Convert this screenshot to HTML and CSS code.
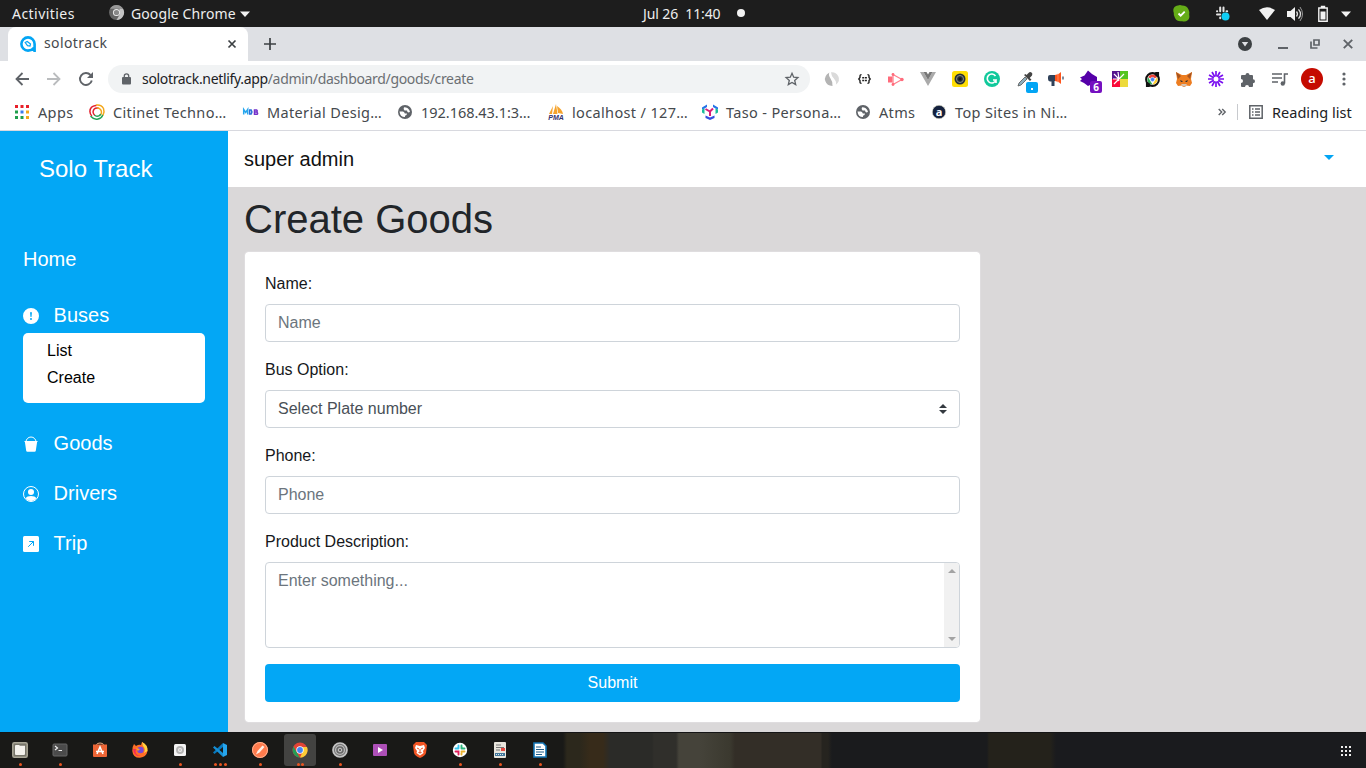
FILE: index.html
```html
<!DOCTYPE html>
<html lang="en">
<head>
<meta charset="utf-8">
<title>solotrack</title>
<link rel="stylesheet" href="styles.css">
</head>
<body>
<div class="desktop">
<header class="topbar">
  <span class="activities">Activities</span>
  <svg class="app-logo" width="15" height="15" viewBox="0 0 16 16"><circle cx="8" cy="8" r="8" fill="#666"/><path d="M1 4a8 8 0 0 1 14 0H8z" fill="#999"/><path d="M15 4a8 8 0 0 1-7 12l3.500-6L11 4z" fill="#c4c4c4"/><circle cx="8" cy="8" r="3.800" fill="#eee"/><circle cx="8" cy="8" r="2.800" fill="#888"/></svg>
  <span class="app-name">Google Chrome</span>
  <svg class="app-caret" width="10" height="6" viewBox="0 0 10 6"><path d="M0 .5h10L5 6z" fill="#f2f2f2"/></svg>
  <span class="clock">Jul 26&nbsp; 11:40</span>
  <span class="dot"></span>
  <div class="tray">
    <svg width="17" height="17" viewBox="0 0 17 17"><path d="M5 .5q2-.8 4 0 5 0 6.500 4 1.500 3 .7 5 .8 4-1.500 5.800-2.500 2-5.500.9Q4 17 2 13 .3 10 .8 8-.5 4 1.500 2 3 .4 5 .5z" fill="#65ac17"/><path d="M5.500 8.500l2.200 2.200 4-4" fill="none" stroke="#fff" stroke-width="1.800"/></svg>
    <svg width="17" height="17" viewBox="0 0 17 17"><g fill="none" stroke="#e4e4e4" stroke-width="2" stroke-linecap="round"><path d="M6.200 2.500v3.700M3 6.200h.2M9.500 2.500v3.700M12.500 6.200h.7M3 9.500h3.200M6.200 12.500v.7M9.500 9.500h3"/></g><circle cx="11.500" cy="11.500" r="4" fill="#10cdf5"/></svg>
    <svg width="16" height="13" viewBox="0 0 16 13"><path d="M0 3Q8-2.500 16 3L8 13z" fill="#f2f2f2"/></svg>
    <svg width="17" height="16" viewBox="0 0 17 16"><path d="M0 5h3.500L8 1v14l-4.500-4H0z" fill="#f2f2f2"/><path d="M9.500 5.500q2 2.500 0 5M11.500 3.300q4 4.700 0 9.400" fill="none" stroke="#ddd" stroke-width="1.300"/><path d="M13 1q5 7 0 14" fill="none" stroke="#999"/></svg>
    <svg width="10" height="16" viewBox="0 0 10 16"><path d="M3.500 1.500V.5h3v1M.8 2h8.400v13.200H.8z" fill="none" stroke="#f2f2f2" stroke-width="1.400"/><path d="M2.500 5.500h5v8h-5z" fill="#f2f2f2"/></svg>
    <svg width="10" height="6" viewBox="0 0 10 6"><path d="M0 .5h10L5 6z" fill="#f2f2f2"/></svg>
  </div>
</header>

<div class="tabstrip">
  <div class="tab">
    <svg width="16" height="16" viewBox="0 0 16 16"><path d="M14.600 16V8A6.600 6.600 0 1 0 8 14.600q4 0 6-3" fill="none" stroke="#03a5f4" stroke-width="2.600"/><path d="M5.200 6.500l2-1 3.300 2.500-.5 2-2.500-.3z" fill="none" stroke="#03a5f4" stroke-width="1.200"/></svg>
    <span class="tab-title">solotrack</span>
    <svg width="8" height="8" viewBox="0 0 8 8"><path d="M.5.5l7 7M7.500.5l-7 7" stroke="#3c4043" stroke-width="1.700"/></svg>
  </div>
  <svg class="newtab" width="12" height="12" viewBox="0 0 12 12"><path d="M6 0v12M0 6h12" stroke="#3c4043" stroke-width="1.700"/></svg>
  <div class="window-controls">
    <svg width="14" height="14" viewBox="0 0 14 14"><circle cx="7" cy="7" r="7" fill="#3c4043"/><path d="M3.800 5h6.400L7 9.500z" fill="#dee0e4"/></svg>
    <svg width="10" height="14" viewBox="0 0 10 14"><path d="M0 11h10" stroke="#5f6368" stroke-width="2"/></svg>
    <svg width="10" height="10" viewBox="0 0 10 10"><path d="M4 1h5v5H4zM1 2.500V9h6.500" fill="none" stroke="#5f6368" stroke-width="1.700"/></svg>
    <svg width="10" height="10" viewBox="0 0 10 10"><path d="M.8.8l8.400 8.400M9.200.8L.8 9.200" stroke="#5f6368" stroke-width="1.900"/></svg>
  </div>
</div>

<div class="toolbar">
  <div class="nav">
    <svg width="14" height="14" viewBox="0 0 14 14"><path d="M14 7H1.500M7.500 1L1.500 7l6 6" fill="none" stroke="#5f6368" stroke-width="1.800"/></svg>
    <svg width="14" height="14" viewBox="0 0 14 14"><path d="M0 7h12.500M6.500 1l6 6-6 6" fill="none" stroke="#babcbe" stroke-width="1.800"/></svg>
    <svg width="14" height="14" viewBox="0 0 14 14"><path d="M12.800 8.500A6 6 0 1 1 11.500 3" fill="none" stroke="#5f6368" stroke-width="1.900"/><path d="M14 0v6H8z" fill="#5f6368"/></svg>
  </div>
  <div class="omnibox">
    <svg width="9" height="12" viewBox="0 0 9 12"><path d="M2.300 5V3a2.200 2.200 0 0 1 4.400 0v2" fill="none" stroke="#5f6368" stroke-width="1.300"/><rect y="4" width="9" height="7.500" rx="1" fill="#5f6368"/></svg>
    <span class="url">solotrack.netlify.app<span class="path">/admin/dashboard/goods/create</span></span>
    <svg width="14" height="14" viewBox="0 0 14 14"><path d="M7 1.300l1.700 3.900 4.200.4-3.200 2.800 1 4.200L7 10.400l-3.700 2.200 1-4.200-3.200-2.800 4.200-.4z" fill="none" stroke="#5f6368" stroke-width="1.300"/></svg>
  </div>
  <div class="extensions">
    <i><svg width="14" height="14" viewBox="0 0 14 14"><path d="M4.500.5Q3 3 5.500 6.500T7.500 13.900Q2 14 .3 9T4.500.5z" fill="#b4b4b4"/><path d="M6 .2q5-.5 7.300 4t-2.500 8.600q1-3-1.800-6T6 .2z" fill="#dadada"/><path d="M5 .7q0 3 3 6t1.500 6.500" fill="none" stroke="#fff" stroke-width=".8"/></svg></i>
    <i><svg width="13" height="10" viewBox="0 0 13 10"><path d="M3.500.7Q2 .5 2 2v1.500L.8 5 2 6.500V8q0 1.500 1.500 1.300M9.500.7Q11 .5 11 2v1.500L12.200 5 11 6.500V8q0 1.500-1.500 1.300M4.200 3.800h2m.7 0h2m-4.700 2.700h2m.7 0h2" fill="none" stroke="#222" stroke-width="1.400"/></svg></i>
    <i><svg width="16" height="13" viewBox="0 0 16 13"><path d="M0 3.500h4.500v6H0z" fill="#ff6b7b"/><path d="M5 1.500l9 5-9 5z" fill="none" stroke="#ff7d8a" stroke-width="1.200"/><circle cx="5" cy="1.500" r="1.400" fill="#ff6b7b"/><circle cx="14" cy="6.500" r="1.700" fill="#ff6b7b"/><circle cx="5" cy="11.500" r="1.400" fill="#ff6b7b"/></svg></i>
    <i><svg width="16" height="14" viewBox="0 0 16 14"><path d="M0 0h3.500L8 8l4.500-8H16L8 14z" fill="#aaa"/><path d="M3.500 0h3L8 2.600 9.500 0h3L8 8z" fill="#777"/></svg></i>
    <i><svg width="16" height="16" viewBox="0 0 16 16"><rect width="16" height="16" rx="2.500" fill="#ffde05"/><circle cx="8" cy="8" r="5.500" fill="#252f38"/><circle cx="8" cy="8" r="3.500" fill="none" stroke="#8a8d85"/><circle cx="8" cy="8" r="1.500" fill="#111"/></svg></i>
    <i><svg width="16" height="16" viewBox="0 0 16 16"><circle cx="8" cy="8" r="8" fill="#11c99b"/><path d="M11.500 5A4.500 4.500 0 1 0 12 9H9m3 0v3" fill="none" stroke="#fff" stroke-width="1.600"/></svg></i>
    <i><svg class="wide" width="22" height="22" viewBox="0 0 22 22"><path d="M2 15l1-3 6-6 2 2-6 6z" fill="#8faebd" stroke="#555" stroke-width=".8"/><path d="M8 4l6 6 1.500-1.500-1.800-1.500L16 4.500q1-2-.5-3t-3 .5L10.500 4 9.500 3z" fill="#444"/><rect x="10" y="11" width="12" height="11" rx="2" fill="#03a5f4"/><rect x="15" y="17" width="2" height="2" fill="#fff"/></svg></i>
    <i><svg width="16" height="14" viewBox="0 0 16 14"><path d="M0 5q0-2 2-2h5v6H6.500v5h-3V9.500H2Q0 9 0 7z" fill="#2f4159"/><path d="M7 3q4-.5 6-3v12q-2-2.500-6-3z" fill="#ff551c"/><path d="M10 1.500v9" stroke="#ffb194" stroke-width=".6"/><path d="M15 4.500v3" stroke="#2f4159" stroke-width="1.200"/></svg></i>
    <i><svg class="wide" width="22" height="22" viewBox="0 0 22 22"><path d="M0 6.500l4.500-2L8-.5l4 3.500 5 3v5l-5 2-4 2-4-3-4-2 2-2z" fill="#5500a8"/><rect x="10" y="10" width="12" height="12" rx="2" fill="#7510c0"/><text x="16" y="19.800" text-anchor="middle" class="badge">6</text></svg></i>
    <i><svg width="16" height="16" viewBox="0 0 16 16"><path d="M0 0h8v8H0z" fill="#54158e"/><path d="M8 0h8v8H8z" fill="#55c51f"/><path d="M0 8h8v8H0z" fill="#fa0938"/><path d="M8 8h8v8H8z" fill="#edda3c"/><path d="M7 8L2 3m5 5L6 1m1 7l5-5M7 8H1m6 0l-5 5m4-5l1 2" stroke="#fff" stroke-width="1.200"/></svg></i>
    <i><svg width="15" height="15" viewBox="0 0 16 16"><circle cx="8" cy="8" r="6.800" fill="#fff" stroke="#111" stroke-width="2.200"/><path d="M11 0h4v5h-5zM5 16H1v-5h5z" fill="#111"/><path d="M3.300 5.500a5.300 5.300 0 0 1 9.400 0L8 8z" fill="#ef4136"/><path d="M3.300 5.500L8 13.300a5.300 5.300 0 0 1-4.700-7.800z" fill="#2ca950"/><path d="M8 13.300L12.700 5.500A5.300 5.300 0 0 1 8 13.300z" fill="#ffcf2e"/><circle cx="8" cy="8" r="2.300" fill="#4285f4" stroke="#fff" stroke-width=".6"/></svg></i>
    <i><svg width="16" height="16" viewBox="0 0 16 16"><path d="M0 1l6 3h4l6-3-1 7 1 4-2 3-4-.5L9 16H7l-1-1.500L2 15l-2-3 1-4z" fill="#ed7d20"/><path d="M0 1l5 4-3 3zM16 1l-5 4 3 3z" fill="#a75420"/><path d="M5 13h6l-2 2.500H7z" fill="#d5c4b5"/><path d="M4 9l2.500 1v1H5zm8 0l-2.500 1v1H11z" fill="#333"/></svg></i>
    <i><svg width="16" height="16" viewBox="-8 -8 16 16"><g stroke="#7a10f0" stroke-width="1.700"><path d="M0-8V8M-8 0H8M-4-7L4 7M-7-4L7 4M4-7L-4 7M7-4L-7 4"/></g><circle r="2.500" fill="#fff"/></svg></i>
    <i><svg width="15" height="15" viewBox="0 0 15 15"><path d="M0 4q0-1 1-1h3.500a2 2 0 1 1 4 0H11q1 0 1 1v3.200a2 2 0 1 1 0 4V14q0 1-1 1H8a2 2 0 1 0-4 0H1q-1 0-1-1v-3a2 2 0 1 0 0-4z" fill="#5f6368"/></svg></i>
    <i><svg width="16" height="13" viewBox="0 0 16 13"><path d="M0 1h10M0 5h10M0 9h6M12.500 10.500V1H16" fill="none" stroke="#5f6368" stroke-width="1.600"/><circle cx="10.800" cy="10.500" r="2.200" fill="#5f6368"/></svg></i>
    <i><b class="avatar">a</b></i>
    <i><svg width="4" height="14" viewBox="0 0 4 14"><g fill="#5f6368"><circle cx="2" cy="2" r="1.600"/><circle cx="2" cy="7" r="1.600"/><circle cx="2" cy="12" r="1.600"/></g></svg></i>
  </div>
</div>

<div class="bookmarks">
  <div class="bm apps"><svg width="16" height="16" viewBox="0 0 16 16"><path d="M1 1h3v3H1zM6.500 1h3v3h-3zM12 1h3v3h-3z" fill="#e8202a"/><path d="M1 6.500h3v3H1z" fill="#1f9e4b"/><path d="M6.500 6.500h3v3h-3z" fill="#3b7bea"/><path d="M12 6.500h3v3h-3z" fill="#f3a71b"/><path d="M1 12h3v3H1zM6.500 12h3v3h-3z" fill="#1f9e4b"/><path d="M12 12h3v3h-3z" fill="#f3a71b"/></svg><span>Apps</span></div>
  <div class="bm citinet"><svg width="16" height="16" viewBox="0 0 16 16"><g fill="none" stroke-width="1.500" stroke-linecap="round"><path d="M7 1.500Q1 2 .9 7.500q.2 2.500 1.600 4M9 4Q4.500 3.500 4 8q.3 2 1.500 3" stroke="#e3202e"/><path d="M7.500 1q5-.5 7 3.500 1.300 3.500-.5 6.500M8.500 4q3.500.5 4 4 0 2-1.200 3" stroke="#f3a71b"/><path d="M2 12.500q3 3.500 7 2.500 3.500-.8 4.500-3.500M6 11.500q3 2 5.500-1" stroke="#23a455"/></g></svg><span>Citinet Techno…</span></div>
  <div class="bm material"><svg width="16" height="16" viewBox="0 0 16 16"><g fill="none" stroke-width="1.500"><path d="M.7 10.500v-5l2 3 2-3v5" stroke="#27a7ee"/><path d="M6.700 6v4h1.500q1.500-2 0-4z" stroke="#2b72d9"/><path d="M11.500 6v4.200h2.700q1-1-.5-2.200 1-1 0-2zM11.500 8h2" stroke="#7431c9"/></g></svg><span>Material Desig…</span></div>
  <div class="bm local-ip"><svg width="14" height="14" viewBox="0 0 14 14"><circle cx="7" cy="7" r="7" fill="#5f6368"/><path d="M1.500 6.500H5q1.500.3 1.800 2H9q0 2-2 2.200V12Q2 12 1.500 6.500zM6 2.200q4.500 0 6 4.300-1 1.500-2.500.5L9 5.500H6.500Q5 4 6 2.200z" fill="#fff"/></svg><span>192.168.43.1:3…</span></div>
  <div class="bm pma"><svg width="16" height="16" viewBox="0 0 16 16"><path d="M1 10L5 2l-1 8zM5 10L8 0l1.500 10zM9 2q5 3 6 8l-5-1z" fill="#f5a32c"/><text x="8" y="15.500" text-anchor="middle" class="pma-mark">PMA</text></svg><span>localhost / 127…</span></div>
  <div class="bm taso"><svg width="16" height="16" viewBox="0 0 16 16"><path d="M0 3.500L5 .5v2.500L2.500 4.500 0 5.500zM11 .5l5 3v2l-2.500-1L11 3z" fill="#2372e8"/><path d="M0 5.500l2.500-1V10L0 8.500zM16 5.500l-2.500-1V10L16 8.500z" fill="#18bc9c"/><path d="M3.500 5L8 7.500l3-3M8 7.500V12" fill="none" stroke="#d71e7a" stroke-width="2"/><path d="M3.500 11.500L8 13.500l4.500-2V14L8 16l-4.500-2z" fill="#3450df"/></svg><span>Taso - Persona…</span></div>
  <div class="bm atms"><svg width="14" height="14" viewBox="0 0 14 14"><circle cx="7" cy="7" r="7" fill="#5f6368"/><path d="M1.500 6.500H5q1.500.3 1.800 2H9q0 2-2 2.200V12Q2 12 1.500 6.500zM6 2.200q4.500 0 6 4.300-1 1.500-2.500.5L9 5.500H6.500Q5 4 6 2.200z" fill="#fff"/></svg><span>Atms</span></div>
  <div class="bm sites"><svg width="14" height="14" viewBox="0 0 14 14"><circle cx="7" cy="7" r="6.700" fill="#14213e" stroke="#dcdcc4" stroke-width=".6"/><text x="7" y="10.800" text-anchor="middle" class="a-mark">a</text></svg><span>Top Sites in Ni…</span></div>
  <div class="reading">
    <svg width="8" height="8" viewBox="0 0 8 8"><path d="M.7 1l3 3-3 3M4.200 1l3 3-3 3" fill="none" stroke="#5f6368" stroke-width="1.400"/></svg>
    <span class="divider"></span>
    <svg width="14" height="14" viewBox="0 0 14 14"><path d="M.8.8h12.400v12.400H.8z" fill="none" stroke="#5f6368" stroke-width="1.500"/><path d="M3 4h1.500M3 7h1.500M3 10h1.500M6 4h5M6 7h5M6 10h5" stroke="#5f6368" stroke-width="1.500"/></svg>
    <span class="reading-label">Reading list</span>
  </div>
</div>

<div class="app">
  <nav class="sidebar">
    <div class="brand">Solo Track</div>
    <a class="home">Home</a>
    <a class="item buses"><svg width="16" height="16" viewBox="0 0 16 16"><path fill="#fff" fill-rule="evenodd" d="M16 8A8 8 0 1 1 0 8a8 8 0 0 1 16 0zM8 4a.905.905 0 0 0-.9.995l.35 3.507a.552.552 0 0 0 1.100 0l.35-3.507A.905.905 0 0 0 8 4zm0 6a1 1 0 1 0 0 2 1 1 0 0 0 0-2z"/></svg>Buses</a>
    <div class="submenu"><a>List</a><a>Create</a></div>
    <a class="item"><svg width="16" height="16" viewBox="0 0 16 16"><path d="M3 6a5 5 0 0 1 10 0" fill="none" stroke="#fff"/><path fill="#fff" d="M1.500 5h13v1h-.4l-1.300 8.700q-.2 1.100-1.200 1.100H4.400q-1 0-1.200-1.100L1.900 6h-.4z"/></svg>Goods</a>
    <a class="item"><svg width="16" height="16" viewBox="0 0 16 16"><circle cx="8" cy="8" r="7.500" fill="none" stroke="#fff"/><circle cx="8" cy="6" r="3" fill="#fff"/><path fill="#fff" d="M2.500 12q1.500-2 5.500-2t5.500 2q-2 3-5.500 3t-5.500-3z"/></svg>Drivers</a>
    <a class="item"><svg width="16" height="16" viewBox="0 0 16 16"><rect width="16" height="16" rx="1.500" fill="#fff"/><path d="M5.200 10.800L10.600 5.400M6.200 5.500h4.300v4.300" fill="none" stroke="#03a5f4"/></svg>Trip</a>
  </nav>
  <main class="main">
    <div class="userbar"><span>super admin</span><svg width="10" height="5" viewBox="0 0 10 5"><path d="M0 0h10L5 5z" fill="#03a5f4"/></svg></div>
    <div class="content">
      <h1>Create Goods</h1>
      <form class="card">
        <label>Name:</label>
        <input class="control" placeholder="Name">
        <label>Bus Option:</label>
        <div class="control select"><span>Select Plate number</span><svg width="8" height="10" viewBox="0 0 4 5"><path fill="#343a40" d="M2 0L0 2h4zm0 5L0 3h4z"/></svg></div>
        <label>Phone:</label>
        <input class="control" placeholder="Phone">
        <label>Product Description:</label>
        <div class="control area"><span>Enter something...</span><div class="rail"><svg width="8" height="4" viewBox="0 0 8 4"><path d="M0 4l4-4 4 4z" fill="#a3a3a3"/></svg><svg width="8" height="4" viewBox="0 0 8 4"><path d="M0 0l4 4 4-4z" fill="#a3a3a3"/></svg></div></div>
        <button class="submit" type="button">Submit</button>
      </form>
    </div>
  </main>
</div>

<footer class="dock">
  <div class="launcher one"><svg width="16" height="16" viewBox="0 0 16 16"><rect x=".8" y=".8" width="14.400" height="14.400" rx="1.500" fill="#77756a" stroke="#aaa798" stroke-width="1.500"/><path d="M3 4q0-1 1-1h3l1 .7h5V12q0 1-1 1H4q-1 0-1-1z" fill="#f4f2ed"/></svg></div>
  <div class="launcher one"><svg width="16" height="16" viewBox="0 0 16 16"><rect x="1" y="2" width="14" height="12" rx="1" fill="#4b4b4b" stroke="#666"/><path d="M3 4l2.500 2L3 8M6.500 8.500H10" fill="none" stroke="#eee" stroke-width="1.200"/></svg></div>
  <div class="launcher"><svg width="16" height="16" viewBox="0 0 16 16"><path d="M4.500 3q0-2 3.500-2t3.500 2" fill="none" stroke="#eca77f"/><path d="M1 2.500h14V14q0 1-1 1H2q-1 0-1-1z" fill="#ed6535"/><path d="M5 12l3-7 3 7M4 9.500h8" fill="none" stroke="#fff" stroke-width="1.500"/></svg></div>
  <div class="launcher"><svg width="16" height="16" viewBox="0 0 16 16"><path d="M2 2l2 2q3-2 5-1l1-3q6 3 5.500 9-1 6-7.500 6.800Q1 16 .3 9 0 5 2 2z" fill="#ff6e26"/><path d="M10 0q6 3 5.500 9L12 11q2-4-1-7z" fill="#ffd23e"/><path d="M1 7q1 8 8 7-7-1-5-7z" fill="#f52758"/><circle cx="8.500" cy="8" r="3.200" fill="#7547d8"/><path d="M4 6l4 1-2 2z" fill="#ff9c27"/></svg></div>
  <div class="launcher one"><svg width="16" height="16" viewBox="0 0 16 16"><rect x="2" y="2" width="12" height="12" rx="1.500" fill="#f4f4f4"/><circle cx="8" cy="8" r="3" fill="none" stroke="#b4b4b4" stroke-width="2"/><circle cx="8" cy="8" r="1.300" fill="#ccc"/></svg></div>
  <div class="launcher three"><svg width="16" height="16" viewBox="0 0 16 16"><path d="M11 1l4 2v10l-4 2z" fill="#26a5ed"/><path d="M1 10.500L11 1v4L2.500 12z" fill="#0879be"/><path d="M1 5.500L11 15v-4L2.500 4z" fill="#168fd5"/></svg></div>
  <div class="launcher one"><svg width="16" height="16" viewBox="0 0 16 16"><circle cx="8" cy="8" r="8" fill="#ff7b4d"/><circle cx="8" cy="8" r="7.500" fill="none" stroke="#ffb08e"/><path d="M4 12.500l1.500-3.500 5-5.500 2 1.500-5 5.500z" fill="#fff1e8"/></svg></div>
  <div class="launcher two active"><svg width="16" height="16" viewBox="0 0 16 16"><circle cx="8" cy="8" r="7.500" fill="#e24436"/><path d="M1.500 4.500L7 14.500l1 1A7.500 7.500 0 0 1 1.500 4.500z" fill="#229e56"/><path d="M8 15.500L11 9V5h4a7.500 7.500 0 0 1-7 10.500z" fill="#fccc36"/><circle cx="8" cy="8" r="3.700" fill="#fff"/><circle cx="8" cy="8" r="2.900" fill="#4285f4"/></svg></div>
  <div class="launcher one"><svg width="16" height="16" viewBox="0 0 16 16"><circle cx="8" cy="8" r="7" fill="#777" stroke="#c5c5c5" stroke-width="1.700"/><circle cx="8" cy="8" r="4.400" fill="#666" stroke="#bbb" stroke-width="1.300"/><circle cx="8" cy="8" r="1.800" fill="none" stroke="#ccc"/></svg></div>
  <div class="launcher"><svg width="16" height="16" viewBox="0 0 16 16"><rect x="1" y="2" width="14" height="12" rx="1" fill="#ae50b8"/><path d="M6 5l5 3-5 3z" fill="#fff"/></svg></div>
  <div class="launcher"><svg width="16" height="16" viewBox="0 0 16 16"><path d="M4 0h8l3 3-1 8q-1 3-6 5-5-2-6-5L1 3z" fill="#f25524"/><path d="M4 3l4 1 4-1 1 3-2 3 .5 2L8 13.500 4.500 11 5 9 3 6z" fill="#fff"/><path d="M5 6l2 1m4-1L9 7M8 7v3M6.500 10.500L8 11l1.500-.5" stroke="#f25524"/></svg></div>
  <div class="launcher one"><svg width="16" height="16" viewBox="0 0 16 16"><circle cx="8" cy="8" r="7.200" fill="#fff"/><g fill="none" stroke-width="1.900" stroke-linecap="round"><path d="M6.500 3.500v3M3.500 6.500h2" stroke="#36c5f0"/><path d="M9.500 3.500v3M10.500 6.500h2" stroke="#2eb67d"/><path d="M9.500 9.500h3M9.500 11v1.500" stroke="#ecb22e"/><path d="M3.500 9.500h3v3" stroke="#e01e5a"/></g></svg></div>
  <div class="launcher one"><svg width="16" height="16" viewBox="0 0 16 16"><rect x="2" width="12" height="16" rx="1" fill="#e8e5dd"/><path d="M4 3h5M4 5.500h8M4 8h4" stroke="#777"/><path d="M9 6h4v3H9z" fill="#e54840"/><path d="M3 11h10v3H3z" fill="#42779b"/><path d="M4 12.500h8" stroke="#dce8f0" stroke-dasharray="1"/></svg></div>
  <div class="launcher one"><svg width="16" height="16" viewBox="0 0 16 16"><path d="M2 1h9l3 3v11H2z" fill="#fff" stroke="#1476b6" stroke-width="1.600"/><path d="M4 5h5M4 7.500h8M4 10h8M4 12.500h6" stroke="#235f8a" stroke-width="1.200"/></svg></div>
  <svg class="grid" width="10" height="10" viewBox="0 0 10 10"><path d="M0 0h2v2H0zM4 0h2v2H4zM8 0h2v2H8zM0 4h2v2H0zM4 4h2v2H4zM8 4h2v2H8zM0 8h2v2H0zM4 8h2v2H4zM8 8h2v2H8z" fill="#eee"/></svg>
</footer>
</div>
</body>
</html>
```
FILE: styles.css
```css
* { box-sizing: border-box; }
body { margin: 0; overflow: hidden; font-family: "Liberation Sans", Arial, sans-serif; }
svg { display: block; flex: none; overflow: visible; }
.desktop { width: 1366px; height: 768px; display: flex; flex-direction: column; }

.topbar, .tabstrip, .toolbar, .bookmarks { font-family: "Noto Sans", sans-serif; font-size: 14px; white-space: nowrap; flex: none; }
.topbar { height: 27px; background: #1d1d1d; color: #eee; display: flex; align-items: center; line-height: 27px; }
.activities { width: 98px; padding-left: 12px; letter-spacing: .45px; }
.app-logo { margin: -2px 0 0 11px; }
.app-name { margin-left: 7px; width: 104px; letter-spacing: .1px; }
.app-caret { margin-left: 5px; }
.clock { margin-left: 393px; width: 82px; font-size: 14px; letter-spacing: -.1px; line-height: 26px; }
.dot { width: 8px; height: 8px; border-radius: 50%; background: #f2f2f2; margin: -2px 0 0 12px; }
.tray { margin-left: auto; display: flex; align-items: center; padding-right: 15px; }
.tray svg:nth-child(2) { margin-left: 24px; }
.tray svg:nth-child(3) { margin-left: 28px; }
.tray svg:nth-child(4) { margin-left: 12px; }
.tray svg:nth-child(5) { margin-left: 14px; }
.tray svg:nth-child(6) { margin-left: 13px; }

.tabstrip { height: 34px; background: #dee0e4; display: flex; align-items: center; color: #45494d; }
.tab { margin-left: 8px; width: 240px; height: 34px; background: #fff; border-radius: 8px 8px 0 0; display: flex; align-items: center; padding: 0 12px; }
.tab-title { margin-left: 8px; flex: 1; letter-spacing: .4px; line-height: 20px; padding-bottom: 2px; }
.newtab { margin-left: 16px; }
.window-controls { margin-left: auto; display: flex; align-items: center; padding-right: 13px; }
.window-controls svg:nth-child(2) { margin-left: 26px; }
.window-controls svg:nth-child(3) { margin-left: 22px; }
.window-controls svg:nth-child(4) { margin-left: 23px; }

.toolbar { height: 36px; background: #fff; display: flex; align-items: center; }
.nav { display: flex; gap: 18px; padding-left: 15px; width: 108px; }
.omnibox { width: 702px; height: 28px; border-radius: 14px; background: #f1f3f4; display: flex; align-items: center; padding: 0 11px 0 14px; }
.url { margin-left: 11px; flex: 1; color: #202124; letter-spacing: -.33px; padding-bottom: 2px; }
.path { color: #6b6f73; }
.extensions { display: flex; margin-left: 6px; }
.extensions i { width: 32px; height: 28px; display: flex; align-items: center; justify-content: center; font-style: normal; }
.wide { margin: 6px 0 0 6px; }
.badge { font: bold 10px "Noto Sans", sans-serif; fill: #fff; }
.avatar { width: 22px; height: 22px; border-radius: 50%; background: #c50b00; color: #fff; font-size: 13px; font-weight: 500; line-height: 20px; text-align: center; }

.bookmarks { height: 34px; border-bottom: 1px solid #d8d9df; background: #fff; display: flex; align-items: center; padding: 0 14px 4px; color: #45494d; font-size: 14.5px; letter-spacing: .35px; }
.bm { display: flex; align-items: center; gap: 8px; width: 154px; }
.bm svg { width: 16px; }
.apps { width: 75px; }
.local-ip { width: 151px; letter-spacing: -.03px; }
.taso { width: 153px; }
.atms { width: 76px; }
.pma-mark { font: italic bold 7px "Liberation Sans", sans-serif; fill: #34316d; letter-spacing: 0; }
.a-mark { font: bold 11px "Noto Sans", sans-serif; fill: #fff; letter-spacing: 0; }
.reading { margin-left: auto; display: flex; align-items: center; color: #202124; letter-spacing: .03px; }
.divider { width: 1px; height: 16px; background: #c8cace; margin: 0 11px 0 11px; }
.reading-label { margin-left: 9px; width: 80px; }

.app { flex: 1; min-height: 0; display: flex; }
.sidebar { width: 228px; background: #03a7f5; color: #fff; padding: 20px 23px 0; font-size: 20px; display: flex; flex-direction: column; line-height: 30px; }
.brand { font-size: 24px; line-height: 36px; padding-left: 16px; margin-bottom: 57px; }
.home { margin-bottom: 26px; }
.item { display: flex; align-items: center; gap: 14.6px; margin-bottom: 20px; }
.item svg { margin-top: 2px; }
.buses { margin-bottom: 3px; }
.submenu { background: #fff; color: #000; height: 70px; border-radius: 5px; padding: 4px 24px; margin-bottom: 25px; font-size: 16px; line-height: 27px; display: flex; flex-direction: column; }
.main { flex: 1; background: #dad8d9; }
.userbar { height: 56px; background: #fff; padding: 0 32px 0 16px; display: flex; align-items: center; justify-content: space-between; font-size: 20px; color: #111; }
.userbar svg { margin-top: -4px; }
.content { padding: 8px 16px; color: #212529; }
h1 { font-size: 40px; font-weight: 400; line-height: 48px; margin: 0 0 8px; }
.card { width: 737px; height: 472px; background: #fff; border: 1px solid #dfdddf; border-radius: 4px; padding: 20px; display: flex; flex-direction: column; font-size: 16px; line-height: 24px; background-clip: padding-box; }
label { margin-bottom: 8px; color: #16181b; }
.control { height: 38px; border: 1px solid #ced4da; border-radius: 4px; background: #fff; margin: 0 0 16px; padding: 6px 12px; font: 16px/24px "Liberation Sans", Arial, sans-serif; color: #6c757d; outline: 0; }
.control::placeholder { color: #6c757d; opacity: 1; }
.select { color: #495057; display: flex; justify-content: space-between; align-items: center; }
.area { height: 86px; padding: 0 0 0 12px; display: flex; justify-content: space-between; overflow: hidden; }
.area span { padding-top: 6px; }
.rail { width: 15px; background: #f1f1f1; display: flex; flex-direction: column; justify-content: space-between; align-items: center; padding: 6px 0; }
.submit { height: 38px; border: 0; border-radius: 4px; background: #03a7f5; color: #fff; font: 16px/24px "Liberation Sans", Arial, sans-serif; padding: 0; }

.dock { height: 36px; flex: none; display: flex; align-items: center; background: linear-gradient(90deg, #191917 0 563px, #2c281c 567px 580px, #372b1a 590px 603px, #2b2b28 610px 652px, #302f2b 654px 676px, #45433a 679px 700px, #3b392f 730px, #332e27 735px 821px, #26241f 822px 828px, #1a1b1d 832px 987px, #24221b 989px 1050px, #1a1b1e 1056px 1366px); border-top: 1px solid #151516; }
.launcher { width: 40px; height: 33px; display: flex; flex-direction: column; align-items: center; justify-content: center; }
.launcher::after { content: ""; width: 3px; height: 3px; border-radius: 50%; margin: 5px 0 -8px; }
.one::after, .two::after, .three::after { background: #e95420; }
.two::after { box-shadow: 4px 0 #e95420; margin-left: -4px; }
.three::after { box-shadow: -5px 0 #e95420, 5px 0 #e95420; }
.dock .launcher { margin-top: -2px; }
.dock .active { width: 32px; height: 32px; margin: -1px 4px 0; border-radius: 3px; background: #434341; }
.grid { margin: 0 15px 0 auto; }
```
